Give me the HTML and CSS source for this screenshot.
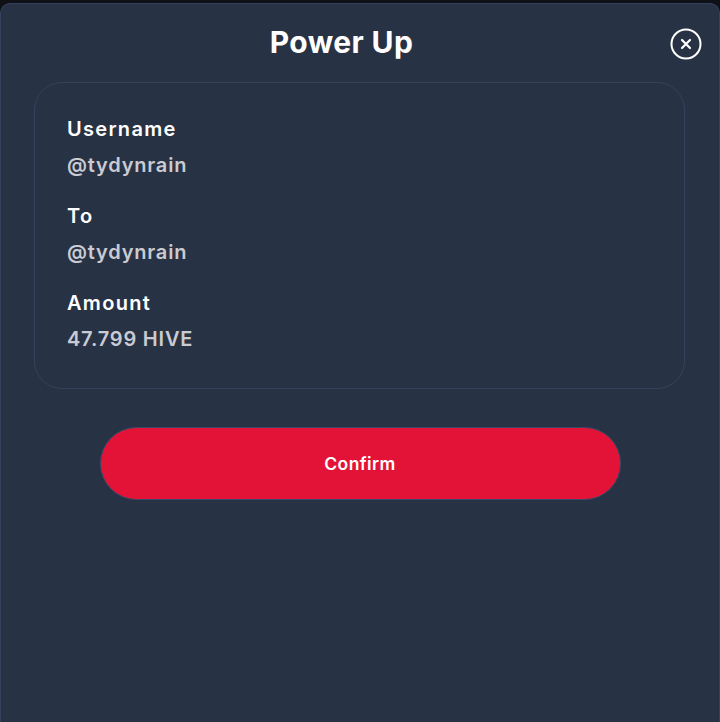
FILE: index.html
```html
<!DOCTYPE html>
<html>
<head>
  <meta charset="UTF-8">
  <title>Power Up</title>
  <link rel="stylesheet" href="styles.css">
</head>
<body>
  <div class="modal">
    <div class="modal-header">
      <h2 class="modal-title">Power Up</h2>
      <button class="close-btn" aria-label="Close">
        <svg width="32" height="32" viewBox="0 0 32 32">
          <circle cx="16" cy="16" r="14.5" fill="none" stroke="#fff" stroke-width="2"/>
          <path d="M12 12 L20 20 M20 12 L12 20" stroke="#fff" stroke-width="2.2" stroke-linecap="round"/>
        </svg>
      </button>
    </div>

    <div class="details">
      <div class="field">
        <div class="field-label">Username</div>
        <div class="field-value">@tydynrain</div>
      </div>
      <div class="field">
        <div class="field-label">To</div>
        <div class="field-value">@tydynrain</div>
      </div>
      <div class="field">
        <div class="field-label">Amount</div>
        <div class="field-value">47.799 HIVE</div>
      </div>
    </div>

    <div class="actions">
      <button class="confirm-btn">Confirm</button>
    </div>
  </div>
</body>
</html>
```

FILE: styles.css
```css
html, body {
  height: 100%;
}
body {
  margin: 0;
  background-color: #0f1116;
  font-family: Inter, "Open Sans", sans-serif;
  padding-top: 3px;
  box-sizing: border-box;
}
.modal {
  height: 100%;
  background-color: #283245;
  border: 1px solid #34415c;
  border-bottom: none;
  border-radius: 10px 10px 0 0;
  box-sizing: border-box;
}
.modal-header {
  display: flex;
  align-items: center;
  padding: 18px 17px 0 12px;
  height: 40px;
}
.modal-title {
  flex: 1;
  margin: 0;
  text-align: center;
  color: #fff;
  font-size: 30px;
  font-weight: 700;
  letter-spacing: 0.4px;
}
.close-btn {
  width: 32px;
  height: 32px;
  margin-top: 4px;
  padding: 0;
  border: none;
  background: none;
  cursor: pointer;
}
.close-btn svg {
  display: block;
}
.details {
  margin: 20px 34px 0 33px;
  padding: 28px 32px 31px 32px;
  border: 1px solid #34425c;
  border-radius: 28px;
}
.field {
  margin-bottom: 15px;
}
.field:last-child {
  margin-bottom: 0;
}
.field-label {
  color: #fff;
  font-size: 20px;
  font-weight: 600;
  line-height: 36px;
  letter-spacing: 1.3px;
}
.field-value {
  color: #cacbd2;
  font-size: 20px;
  font-weight: 600;
  line-height: 36px;
  letter-spacing: 0.8px;
}
.actions {
  display: flex;
  justify-content: center;
  margin-top: 38px;
}
.confirm-btn {
  width: 521px;
  height: 73px;
  border: 1px solid #3a4a68;
  border-radius: 37px;
  background-color: #e31337;
  color: #fff;
  font-family: inherit;
  font-size: 17.5px;
  font-weight: 600;
  letter-spacing: 0.4px;
  cursor: pointer;
}
```
